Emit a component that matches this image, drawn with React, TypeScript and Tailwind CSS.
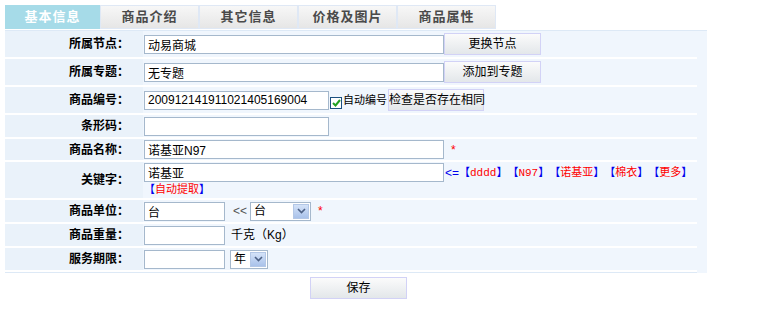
import { useState } from 'react';

const tabs = ['基本信息', '商品介绍', '其它信息', '价格及图片', '商品属性'];

function Label({ children }: { children: string }) {
  return (
    <div className="w-[138px] shrink-0 bg-[#eaf2fa] flex items-center justify-end pr-[14px] font-bold text-[12px] text-black">
      {children}
    </div>
  );
}

function Row({ label, h, children }: { label: string; h: string; children: React.ReactNode }) {
  return (
    <div className={`flex border-b-[2px] border-white ${h}`}>
      <Label>{label}</Label>
      <div className="flex-1 flex items-center bg-[#f0f6fd] pl-[1px] whitespace-nowrap">{children}</div>
    </div>
  );
}

const inputCls =
  'h-[19px] border border-[#a5b8cc] px-[3px] text-[12px] text-black outline-none bg-white';

function Btn({ children, w }: { children: string; w: string }) {
  return (
    <button
      className={`${w} h-[22px] border border-[#d2d2f6] bg-gradient-to-b from-[#fbfbfb] to-[#e3e7ea] text-[12px] text-black whitespace-nowrap`}
    >
      {children}
    </button>
  );
}

function Select({ value, w }: { value: string; w: string }) {
  return (
    <div className={`${w} h-[19px] border border-[#a5b8cc] bg-white flex items-center justify-between pl-[3px] pr-[1px] text-[12px]`}>
      <span>{value}</span>
      <span className="w-[16px] h-[15px] bg-gradient-to-b from-[#d4e2f8] to-[#a9c2ea] border border-[#b3c7e6] flex items-center justify-center">
        <svg width="9" height="6" viewBox="0 0 9 6">
          <path d="M1 1 L4.5 4.5 L8 1" fill="none" stroke="#4d6185" strokeWidth="1.6" />
        </svg>
      </span>
    </div>
  );
}

// latin keywords look monospaced in the original, so give them a mono face
const Tag = ({ t, mono }: { t: string; mono?: boolean }) => (
  <span className="whitespace-nowrap text-[11px]">
    <span className="text-[#0000ee]">【</span>
    <span className={`text-[#ff0000] ${mono ? 'font-["Liberation_Mono"]' : ''}`}>{t}</span>
    <span className="text-[#0000ee]">】</span>
  </span>
);

export default function App() {
  const [auto, setAuto] = useState(true);
  return (
    <div
      className="w-[775px] h-[315px] bg-white pt-[5px] text-[12px]"
      style={{ fontFamily: '"Liberation Sans", "Noto Sans CJK SC", sans-serif' }}
    >
      <div className="flex pl-[5px] h-[24px]">
        {tabs.map((t, i) =>
          i === 0 ? (
            <div
              key={t}
              className="w-[95px] bg-[#a6dbe8] text-white font-bold text-[13px] flex items-center justify-center tracking-[1px]"
            >
              {t}
            </div>
          ) : (
            <div
              key={t}
              className="w-[99px] border border-[#dfe8f5] bg-gradient-to-b from-[#f7f7f7] to-[#e6e6e6] text-[#4a4a4a] font-bold text-[13px] flex items-center justify-center tracking-[1px]"
            >
              {t}
            </div>
          )
        )}
      </div>
      <div className="ml-[5px] w-[702px] mt-[1px] bg-[#f0f6fd] border-t border-[#dde9f6] pr-[10px]">
        <Row label="所属节点：" h="h-[28px]">
          <input className={`${inputCls} w-[300px] bg-[#ecebe4] text-[#444]`} defaultValue="动易商城" readOnly />
          <Btn w="w-[97px]">更换节点</Btn>
        </Row>
        <Row label="所属专题：" h="h-[28px]">
          <input className={`${inputCls} w-[300px] bg-[#ecebe4] text-[#444]`} defaultValue="无专题" readOnly />
          <Btn w="w-[97px]">添加到专题</Btn>
        </Row>
        <Row label="商品编号：" h="h-[28px]">
          <input
            className={`${inputCls} w-[185px] bg-[#ecebe4] text-[#555] text-[11px]`}
            defaultValue="200912141911021405169004"
            readOnly
          />
          <span
            onClick={() => setAuto(!auto)}
            className="ml-[1px] mt-[5px] w-[12px] h-[12px] border border-[#1c5180] bg-white flex items-center justify-center"
          >
            {auto && (
              <svg width="9" height="8" viewBox="0 0 9 8">
                <path d="M1 4 L3.5 6.5 L8 1" fill="none" stroke="#21a121" strokeWidth="2" />
              </svg>
            )}
          </span>
          <span className="ml-[1px] text-black text-[11px]">自动编号</span>
          <Btn w="w-[96px] ml-[1px] px-0">检查是否存在相同</Btn>
        </Row>
        <Row label="条形码：" h="h-[24px]">
          <input className={`${inputCls} w-[185px]`} />
        </Row>
        <Row label="商品名称：" h="h-[23px]">
          <input className={`${inputCls} w-[300px]`} defaultValue="诺基亚N97" />
          <span className="ml-[7px] text-[#ff0000]">*</span>
        </Row>
        <Row label="关键字：" h="h-[38px]">
          <div className="flex flex-col self-start pt-[1px]">
            <div className="flex items-center">
              <input className={`${inputCls} w-[300px]`} defaultValue="诺基亚" />
              <span className="text-[#0000ee] ml-[1px]">&lt;=</span>
              <Tag t="dddd" mono />
              <Tag t="N97" mono />
              <Tag t="诺基亚" />
              <Tag t="棉衣" />
              <Tag t="更多" />
            </div>
            <div className="leading-[15px]">
              <Tag t="自动提取" />
            </div>
          </div>
        </Row>
        <Row label="商品单位：" h="h-[24px]">
          <input className={`${inputCls} w-[81px]`} defaultValue="台" />
          <span className="ml-[8px] text-[#555]">&lt;&lt;</span>
          <div className="ml-[3px]">
            <Select value="台" w="w-[61px]" />
          </div>
          <span className="ml-[7px] text-[#ff0000]">*</span>
        </Row>
        <Row label="商品重量：" h="h-[24px]">
          <input className={`${inputCls} w-[81px]`} />
          <span className="ml-[6px] text-black">千克（Kg）</span>
        </Row>
        <Row label="服务期限：" h="h-[24px]">
          <input className={`${inputCls} w-[81px]`} />
          <div className="ml-[5px]">
            <Select value="年" w="w-[38px]" />
          </div>
        </Row>
        <div className="h-[1px] border-b border-[#dde9f6]" />
      </div>
      <div className="flex justify-start pl-[310px] pt-[4px]">
        <Btn w="w-[97px]">保存</Btn>
      </div>
    </div>
  );
}
